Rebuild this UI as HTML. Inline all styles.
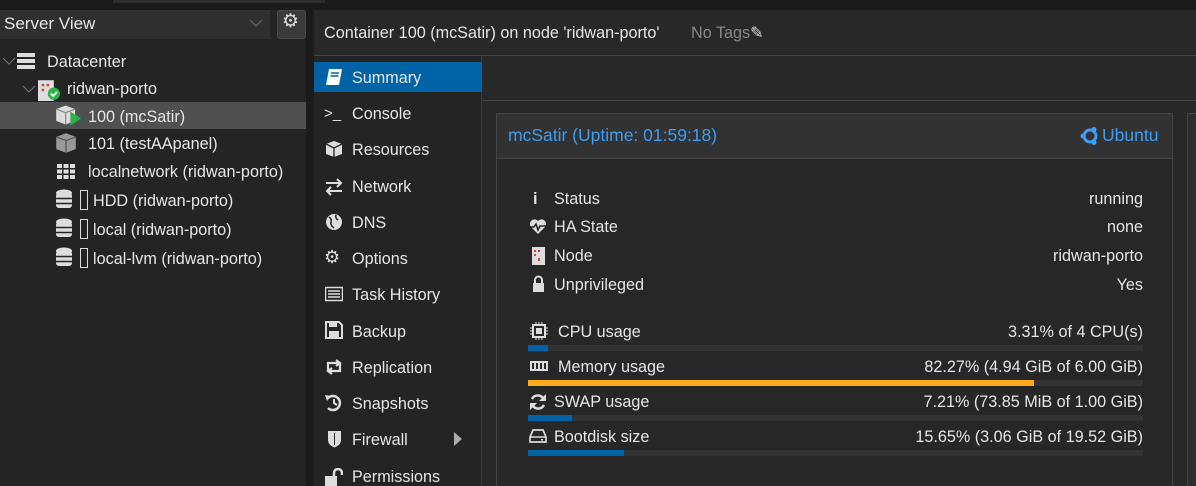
<!DOCTYPE html>
<html style="overflow:hidden;height:486px"><head><meta charset="utf-8"><style>
*{margin:0;padding:0;box-sizing:border-box}
body{width:1196px;height:486px;overflow:hidden;background:#1b1b1b;font-family:"Liberation Sans",sans-serif;color:#e6e6e6;font-size:16px;position:relative}
.a{position:absolute}
.t{position:absolute;white-space:nowrap;line-height:20px;margin-top:1px;font-size:16.2px}
.ic{position:absolute;width:18px;height:18px}
</style></head><body>
<div class="a" style="left:0;top:0;width:1196px;height:10px;background:#1b1b1b"></div>
<div class="a" style="left:113px;top:0;width:212px;height:3px;background:#2e2e2e"></div>
<div class="a" style="left:0;top:10px;width:306px;height:476px;background:#242424"></div>
<div class="a" style="left:0;top:10px;width:270px;height:29px;background:#2f2f2f"></div>
<div class="t" style="left:4px;top:13px;font-size:17px">Server View</div>
<svg class="a" style="left:249px;top:18px" width="14" height="10"><path d="M1 2l6 6 6-6" stroke="#666" fill="none" stroke-width="1.3"/></svg>
<div class="a" style="left:277px;top:10px;width:29px;height:29px;background:#3a3a3a;border:1px solid #4a4a4a;border-radius:3px"></div>
<div class="t" style="left:282px;top:11px;font-size:19px;color:#ddd">⚙</div>
<div class="a" style="left:0;top:46px;width:306px;height:440px;background:#242424"></div>
<div class="a" style="left:0;top:102px;width:306px;height:27px;background:#505050"></div>
<svg class="a" style="left:2px;top:56px" width="14" height="10"><path d="M1 2l6 6 6-6" stroke="#777" fill="none"/></svg>
<svg class="ic" style="left:17px;top:52px" viewBox="0 0 18 18"><rect x="0" y="1" width="18" height="4" fill="#ddd"/><rect x="0" y="7" width="18" height="4" fill="#ddd"/><rect x="0" y="13" width="18" height="4" fill="#ddd"/></svg>
<div class="t" style="left:47px;top:51px">Datacenter</div>
<svg class="a" style="left:22px;top:84px" width="14" height="10"><path d="M1 2l6 6 6-6" stroke="#777" fill="none"/></svg>
<svg class="a" style="left:37px;top:79px" width="24" height="22" viewBox="0 0 18 18"><rect x="0" y="1" width="13" height="17" fill="#ddd"/><rect x="3" y="4" width="2" height="2" fill="#c44"/><rect x="7" y="4" width="2" height="2" fill="#c44"/><rect x="3" y="8" width="2" height="2" fill="#c44"/><circle cx="13" cy="12" r="5" fill="#2bb34a"/><path d="M10.5 12l2 2 3-3.5" stroke="#fff" stroke-width="1.5" fill="none"/></svg>
<div class="t" style="left:67px;top:78px">ridwan-porto</div>
<svg class="a" style="left:55px;top:104px" width="26" height="22" viewBox="0 0 22 18"><path d="M1 4l8-3 8 3v10l-8 3-8-3z" fill="#ddd"/><path d="M9 7v10M1 4l8 3 8-3" stroke="#888" fill="none"/><path d="M13 6l9 6-9 6z" fill="#2bb34a"/></svg>
<div class="t" style="left:88px;top:106px">100 (mcSatir)</div>
<svg class="a" style="left:55px;top:132px" width="22" height="22" viewBox="0 0 18 18"><path d="M1 4l8-3 8 3v10l-8 3-8-3z" fill="#999"/><path d="M9 7v10M1 4l8 3 8-3" stroke="#555" fill="none"/></svg>
<div class="t" style="left:88px;top:133px">101 (testAApanel)</div>
<svg class="a" style="left:56px;top:162px" width="20" height="18" viewBox="0 0 18 18"><g fill="#ddd"><rect x="0" y="2" width="5" height="4"/><rect x="6.5" y="2" width="5" height="4"/><rect x="13" y="2" width="5" height="4"/><rect x="0" y="7.5" width="5" height="4"/><rect x="6.5" y="7.5" width="5" height="4"/><rect x="13" y="7.5" width="5" height="4"/><rect x="0" y="13" width="5" height="4"/><rect x="6.5" y="13" width="5" height="4"/><rect x="13" y="13" width="5" height="4"/></g></svg>
<div class="t" style="left:88px;top:161px">localnetwork (ridwan-porto)</div>
<svg class="a" style="left:56px;top:189px" width="34" height="22" viewBox="0 0 34 22"><g fill="#ddd"><ellipse cx="8" cy="4" rx="8" ry="3.5"/><rect x="0" y="4" width="16" height="15" rx="3"/></g><path d="M0 9.5h16M0 14.5h16" stroke="#242424" stroke-width="1.5"/><rect x="24.5" y="1.5" width="7" height="19" stroke="#ddd" fill="none"/></svg>
<div class="t" style="left:93px;top:190px">HDD (ridwan-porto)</div>
<svg class="a" style="left:56px;top:218px" width="34" height="22" viewBox="0 0 34 22"><g fill="#ddd"><ellipse cx="8" cy="4" rx="8" ry="3.5"/><rect x="0" y="4" width="16" height="15" rx="3"/></g><path d="M0 9.5h16M0 14.5h16" stroke="#242424" stroke-width="1.5"/><rect x="24.5" y="1.5" width="7" height="19" stroke="#ddd" fill="none"/></svg>
<div class="t" style="left:93px;top:219px">local (ridwan-porto)</div>
<svg class="a" style="left:56px;top:247px" width="34" height="22" viewBox="0 0 34 22"><g fill="#ddd"><ellipse cx="8" cy="4" rx="8" ry="3.5"/><rect x="0" y="4" width="16" height="15" rx="3"/></g><path d="M0 9.5h16M0 14.5h16" stroke="#242424" stroke-width="1.5"/><rect x="24.5" y="1.5" width="7" height="19" stroke="#ddd" fill="none"/></svg>
<div class="t" style="left:93px;top:248px">local-lvm (ridwan-porto)</div>
<div class="a" style="left:314px;top:10px;width:882px;height:476px;background:#282828"></div>
<div class="a" style="left:314px;top:55px;width:882px;height:1px;background:#444"></div>
<div class="t" style="left:324px;top:22px">Container 100 (mcSatir) on node 'ridwan-porto'</div>
<div class="t" style="left:691px;top:22px;color:#888">No Tags<span style="color:#ddd">✎</span></div>
<div class="a" style="left:314px;top:56px;width:168px;height:430px;background:#242424;border-right:1px solid #3a3a3a"></div>
<div class="a" style="left:314px;top:62px;width:168px;height:30px;background:#0063a5"></div>
<svg class="ic" style="left:325px;top:68px" viewBox="0 0 18 18"><path d="M4 1h13l-3 16H1z" fill="#fff"/><path d="M6 5h8M5.5 8h8" stroke="#0063a5" stroke-width="1.5"/></svg>
<div class="t" style="left:352px;top:67px">Summary</div>
<div class="t" style="left:324px;top:103px;font-size:15px">&gt;_</div><div class="t" style="left:352px;top:103px">Console</div>
<svg class="ic" style="left:325px;top:140px" viewBox="0 0 18 18"><path d="M9 1l8 3v10l-8 3-8-3V4z" fill="#ddd"/><path d="M9 8v9M1 4l8 4 8-4" stroke="#242424" stroke-width="1.3" fill="none"/></svg><div class="t" style="left:352px;top:139px">Resources</div>
<svg class="ic" style="left:325px;top:178px" viewBox="0 0 18 18"><path d="M1 5h15M12 1l4 4-4 4M17 13H2M6 9l-4 4 4 4" stroke="#ddd" stroke-width="2" fill="none"/></svg><div class="t" style="left:352px;top:176px">Network</div>
<svg class="ic" style="left:325px;top:213px" viewBox="0 0 18 18"><circle cx="9" cy="9" r="8" fill="#ddd"/><path d="M4 4q3 2 2 5t3 6M11 2q-1 3 2 5" stroke="#242424" stroke-width="1.5" fill="none"/></svg><div class="t" style="left:352px;top:212px">DNS</div>
<div class="t" style="left:324px;top:246px;font-size:18px;color:#ddd">⚙</div><div class="t" style="left:352px;top:248px">Options</div>
<svg class="ic" style="left:325px;top:285px" viewBox="0 0 18 18"><rect x="0.5" y="2.5" width="17" height="13" fill="none" stroke="#ddd" stroke-width="1.5"/><path d="M3 6h12M3 9h12M3 12h12" stroke="#ddd" stroke-width="1.5"/></svg><div class="t" style="left:352px;top:284px">Task History</div>
<svg class="ic" style="left:325px;top:321px" viewBox="0 0 18 18"><path d="M1 1h13l3 3v13H1z" fill="none" stroke="#ddd" stroke-width="2"/><rect x="4" y="2" width="8" height="4" fill="#ddd"/><rect x="4" y="10" width="10" height="6" fill="#ddd"/></svg><div class="t" style="left:352px;top:321px">Backup</div>
<svg class="ic" style="left:325px;top:358px" viewBox="0 0 18 18"><path d="M3 12V5h11M11 2l4 3-4 3M15 6v7H4M7 10l-4 3 4 3" stroke="#ddd" stroke-width="2.2" fill="none"/></svg><div class="t" style="left:352px;top:357px">Replication</div>
<svg class="ic" style="left:325px;top:394px" viewBox="0 0 18 18"><path d="M3 4a7 7 0 1 1 0 10" stroke="#ddd" stroke-width="2.5" fill="none"/><path d="M0 1l6 1-4 5z" fill="#ddd"/><path d="M9 5v4l3 2" stroke="#ddd" stroke-width="2" fill="none"/></svg><div class="t" style="left:352px;top:393px">Snapshots</div>
<svg class="ic" style="left:326px;top:430px" viewBox="0 0 18 18"><path d="M2 1h13v9q0 5-6.5 7.5Q2 15 2 10z" fill="#ddd"/><path d="M8.5 3v12" stroke="#242424" stroke-width="1"/></svg><div class="t" style="left:352px;top:429px">Firewall</div>
<svg class="a" style="left:454px;top:432px" width="10" height="14"><path d="M0 0l8 7-8 7z" fill="#aaa"/></svg>
<svg class="ic" style="left:325px;top:468px" viewBox="0 0 18 18"><rect x="0" y="8" width="12" height="10" fill="#ddd"/><path d="M9 8V5a4 4 0 0 1 8 0v2" stroke="#ddd" stroke-width="2.5" fill="none"/></svg><div class="t" style="left:352px;top:466px">Permissions</div>
<div class="a" style="left:483px;top:100px;width:713px;height:1px;background:#444"></div>
<div class="a" style="left:496px;top:113px;width:677px;height:373px;background:#272727;border:1px solid #444;border-bottom:none"></div>
<div class="a" style="left:496px;top:113px;width:677px;height:46px;background:#323232;border:1px solid #444"></div>
<div class="t" style="left:508px;top:124px;color:#3d9df3;font-size:17.5px">mcSatir (Uptime: 01:59:18)</div>
<svg class="a" style="left:1080px;top:126px" width="20" height="20" viewBox="0 0 20 20"><circle cx="10" cy="10" r="6" stroke="#3d9df3" stroke-width="3" fill="none"/><circle cx="3" cy="10" r="2.5" fill="#3d9df3"/><circle cx="14" cy="3.5" r="2.5" fill="#3d9df3"/><circle cx="14" cy="16.5" r="2.5" fill="#3d9df3"/></svg>
<div class="t" style="left:1102px;top:124px;color:#3d9df3;font-size:17.5px">Ubuntu</div>
<div class="a" style="left:1187px;top:113px;width:9px;height:373px;background:#2e2e2e;border-left:1px solid #444;border-top:1px solid #444"></div>
<div class="t" style="left:533px;top:188px;font-weight:bold">i</div><div class="t" style="left:554px;top:188px">Status</div><div class="t" style="right:53px;top:188px">running</div>
<svg class="ic" style="left:529px;top:218px" viewBox="0 0 18 18"><path d="M9 16L2 9a4 4 0 0 1 7-6 4 4 0 0 1 7 6z" fill="#ddd"/><path d="M1 9h4l2-3 2 6 2-4h6" stroke="#242424" stroke-width="1.5" fill="none"/></svg><div class="t" style="left:554px;top:216px">HA State</div><div class="t" style="right:53px;top:216px">none</div>
<svg class="ic" style="left:530px;top:247px" viewBox="0 0 18 18"><rect x="2" y="0" width="13" height="18" fill="#ddd"/><g fill="#c44"><rect x="4" y="3" width="2" height="2"/><rect x="8" y="3" width="2" height="2"/><rect x="4" y="7" width="2" height="2"/><rect x="8" y="11" width="2" height="3"/></g></svg><div class="t" style="left:554px;top:245px">Node</div><div class="t" style="right:53px;top:245px">ridwan-porto</div>
<svg class="ic" style="left:530px;top:275px" viewBox="0 0 18 18"><rect x="3" y="8" width="11" height="9" fill="#ddd"/><path d="M5 8V5a3.5 3.5 0 0 1 7 0v3" stroke="#ddd" stroke-width="2" fill="none"/></svg><div class="t" style="left:554px;top:274px">Unprivileged</div><div class="t" style="right:53px;top:274px">Yes</div>
<svg class="ic" style="left:530px;top:322px" viewBox="0 0 18 18"><rect x="3" y="3" width="12" height="12" fill="none" stroke="#ddd" stroke-width="2"/><rect x="6" y="6" width="6" height="6" fill="#ddd"/><path d="M6 0v3M9 0v3M12 0v3M6 15v3M9 15v3M12 15v3M0 6h3M0 9h3M0 12h3M15 6h3M15 9h3M15 12h3" stroke="#ddd"/></svg><div class="t" style="left:558px;top:321px">CPU usage</div><div class="t" style="right:53px;top:321px">3.31% of 4 CPU(s)</div>
<div class="a" style="left:528px;top:345px;width:615px;height:6px;background:#333"><div style="width:20px;height:6px;background:#0063a5"></div></div>
<svg class="ic" style="left:530px;top:357px" viewBox="0 0 18 18"><rect x="1" y="5" width="16" height="8" fill="none" stroke="#ddd" stroke-width="2"/><path d="M5 6v6M9 6v6M13 6v6" stroke="#ddd" stroke-width="2"/></svg><div class="t" style="left:558px;top:356px">Memory usage</div><div class="t" style="right:53px;top:356px">82.27% (4.94 GiB of 6.00 GiB)</div>
<div class="a" style="left:528px;top:380px;width:615px;height:6px;background:#333"><div style="width:506px;height:6px;background:#ffab19"></div></div>
<svg class="ic" style="left:529px;top:393px" viewBox="0 0 18 18"><path d="M15 7a6.5 6.5 0 0 0-12-1M3 11a6.5 6.5 0 0 0 12 1" stroke="#ddd" stroke-width="2.5" fill="none"/><path d="M17 1v7h-7zM1 17v-7h7z" fill="#ddd"/></svg><div class="t" style="left:554px;top:391px">SWAP usage</div><div class="t" style="right:53px;top:391px">7.21% (73.85 MiB of 1.00 GiB)</div>
<div class="a" style="left:528px;top:415px;width:615px;height:6px;background:#333"><div style="width:44px;height:6px;background:#0063a5"></div></div>
<svg class="ic" style="left:529px;top:427px" viewBox="0 0 18 18"><path d="M1 10l3-7h10l3 7v5H1z" fill="none" stroke="#ddd" stroke-width="1.7"/><path d="M1 10h16" stroke="#ddd" stroke-width="1.5"/><rect x="12" y="12" width="2" height="1.5" fill="#ddd"/></svg><div class="t" style="left:554px;top:426px">Bootdisk size</div><div class="t" style="right:53px;top:426px">15.65% (3.06 GiB of 19.52 GiB)</div>
<div class="a" style="left:528px;top:450px;width:615px;height:6px;background:#333"><div style="width:96px;height:6px;background:#0063a5"></div></div>
</body></html>
